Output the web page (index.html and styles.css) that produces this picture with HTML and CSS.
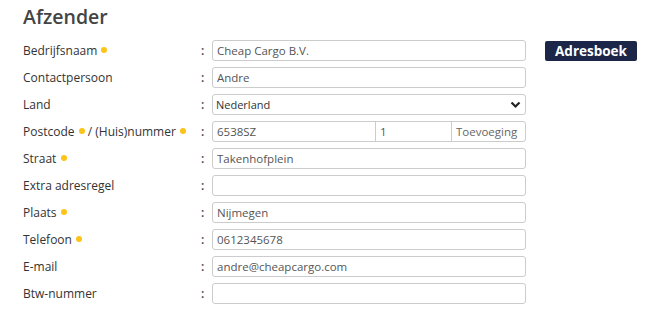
FILE: index.html
```html
<!DOCTYPE html>
<html lang="nl">
<head>
    <meta charset="UTF-8">
    <meta name="viewport" content="width=device-width, initial-scale=1.0">
    <link rel="stylesheet" href="styles.css">
    <title>Afzender</title>
</head>
<body>
    <div class="sender">
        <h2 class="title">Afzender</h2>
        <div class="form">
            <div class="row">
                <label class="label">Bedrijfsnaam <span class="req"></span></label>
                <span class="colon">:</span>
                <input class="field" type="text" value="Cheap Cargo B.V.">
                <button class="book">Adresboek</button>
            </div>
            <div class="row">
                <label class="label">Contactpersoon</label>
                <span class="colon">:</span>
                <input class="field" type="text" value="Andre">
            </div>
            <div class="row">
                <label class="label">Land</label>
                <span class="colon">:</span>
                <div class="field select">
                    <span>Nederland</span>
                    <svg width="11" height="8" viewBox="0 0 11 8"><path d="M1.5 1.5 L5.5 5.5 L9.5 1.5" fill="none" stroke="#222" stroke-width="2.2"/></svg>
                </div>
            </div>
            <div class="row">
                <label class="label">Postcode <span class="req"></span> / (Huis)nummer <span class="req"></span></label>
                <span class="colon">:</span>
                <div class="field split">
                    <input class="part zip" type="text" value="6538SZ">
                    <input class="part nr" type="text" value="1">
                    <input class="part add" type="text" placeholder="Toevoeging">
                </div>
            </div>
            <div class="row">
                <label class="label">Straat <span class="req"></span></label>
                <span class="colon">:</span>
                <input class="field" type="text" value="Takenhofplein">
            </div>
            <div class="row">
                <label class="label">Extra adresregel</label>
                <span class="colon">:</span>
                <input class="field" type="text" value="">
            </div>
            <div class="row">
                <label class="label">Plaats <span class="req"></span></label>
                <span class="colon">:</span>
                <input class="field" type="text" value="Nijmegen">
            </div>
            <div class="row">
                <label class="label">Telefoon <span class="req"></span></label>
                <span class="colon">:</span>
                <input class="field" type="text" value="0612345678">
            </div>
            <div class="row">
                <label class="label">E-mail</label>
                <span class="colon">:</span>
                <input class="field" type="text" value="andre@cheapcargo.com">
            </div>
            <div class="row">
                <label class="label">Btw-nummer</label>
                <span class="colon">:</span>
                <input class="field" type="text" value="">
            </div>
        </div>
    </div>
</body>
</html>
```

FILE: styles.css
```css
body {
    margin: 0;
    font-family: "Open Sans", "Noto Sans", sans-serif;
    color: #333;
    background: #fff;
}

.sender {
    padding: 6px 0 0 23px;
}

.title {
    margin: 0 0 12px 0;
    font-size: 19.5px;
    font-weight: 600;
    color: #444;
    line-height: 22px;
}

.form {
    display: flex;
    flex-direction: column;
    gap: 6px;
}

.row {
    display: flex;
    align-items: center;
    height: 21px;
}

.label {
    width: 178px;
    font-size: 12px;
    color: #333;
    white-space: nowrap;
}

.req {
    display: inline-block;
    width: 6px;
    height: 6px;
    border-radius: 50%;
    background: #fcc419;
    vertical-align: 2px;
    margin-left: 1px;
}

.colon {
    width: 11px;
    font-size: 12px;
    font-weight: 600;
    color: #444;
}

.field {
    box-sizing: border-box;
    width: 314px;
    height: 21px;
    border: 1px solid #ccc;
    border-radius: 3px;
    padding: 0 4px;
    font-family: inherit;
    font-size: 11.5px;
    color: #555;
    background: #fff;
    outline: none;
}

.select {
    display: flex;
    align-items: center;
    justify-content: space-between;
    padding: 0 4px 0 3px;
    color: #333;
    font-size: 11px;
}

.split {
    display: flex;
    padding: 0;
    overflow: hidden;
}

.part {
    box-sizing: border-box;
    height: 19px;
    border: none;
    padding: 0 4px;
    font-family: inherit;
    font-size: 11.5px;
    color: #555;
    outline: none;
    background: transparent;
}

.part::placeholder {
    color: #666;
}

.zip {
    width: 163px;
    border-right: 1px solid #ccc;
}

.nr {
    width: 76px;
    border-right: 1px solid #ccc;
}

.add {
    flex: 1;
    min-width: 0;
}

.book {
    margin-left: 19px;
    width: 92px;
    height: 20px;
    border: none;
    border-radius: 2px;
    background: #1b2649;
    color: #fff;
    font-family: inherit;
    font-size: 13.5px;
    font-weight: 700;
    padding: 0;
    cursor: pointer;
}
```
